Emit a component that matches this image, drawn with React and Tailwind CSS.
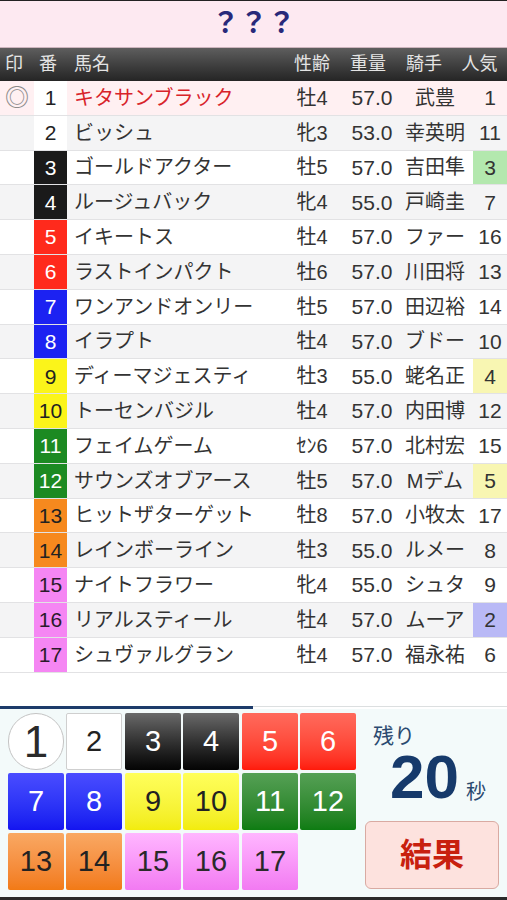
import React from "react";

const horses = [
  [1, "キタサンブラック", "牡4", "57.0", "武豊", 1],
  [2, "ビッシュ", "牝3", "53.0", "幸英明", 11],
  [3, "ゴールドアクター", "牡5", "57.0", "吉田隼", 3],
  [4, "ルージュバック", "牝4", "55.0", "戸崎圭", 7],
  [5, "イキートス", "牡4", "57.0", "ファー", 16],
  [6, "ラストインパクト", "牡6", "57.0", "川田将", 13],
  [7, "ワンアンドオンリー", "牡5", "57.0", "田辺裕", 14],
  [8, "イラプト", "牡4", "57.0", "ブドー", 10],
  [9, "ディーマジェスティ", "牡3", "55.0", "蛯名正", 4],
  [10, "トーセンバジル", "牡4", "57.0", "内田博", 12],
  [11, "フェイムゲーム", "ｾﾝ6", "57.0", "北村宏", 15],
  [12, "サウンズオブアース", "牡5", "57.0", "Mデム", 5],
  [13, "ヒットザターゲット", "牡8", "57.0", "小牧太", 17],
  [14, "レインボーライン", "牡3", "55.0", "ルメー", 8],
  [15, "ナイトフラワー", "牝4", "55.0", "シュタ", 9],
  [16, "リアルスティール", "牡4", "57.0", "ムーア", 2],
  [17, "シュヴァルグラン", "牡4", "57.0", "福永祐", 6],
];

// frame (waku) colours for the number cell
const frameCell = (n) => {
  if (n <= 2) return "bg-white text-[#222]";
  if (n <= 4) return "bg-[#1a1a1a] text-white";
  if (n <= 6) return "bg-[#ff2a1c] text-white";
  if (n <= 8) return "bg-[#1c22f2] text-white";
  if (n <= 10) return "bg-[#fbf41a] text-[#222]";
  if (n <= 12) return "bg-[#1c8a22] text-white";
  if (n <= 14) return "bg-[#f6891e] text-[#222]";
  return "bg-[#f586f3] text-[#2a1a2a]";
};

const frameButton = (n) => {
  if (n <= 2) return "bg-white text-[#222] border border-[#cfcfcf]";
  if (n <= 4) return "bg-gradient-to-b from-[#6a6a6a] to-[#050505] text-white";
  if (n <= 6) return "bg-gradient-to-b from-[#ff6a5c] to-[#ff1a0a] text-white";
  if (n <= 8) return "bg-gradient-to-b from-[#4a4cff] to-[#1414f0] text-white";
  if (n <= 10) return "bg-gradient-to-b from-[#ffff5a] to-[#f2ec0a] text-[#222]";
  if (n <= 12) return "bg-gradient-to-b from-[#55a055] to-[#0d7c12] text-white";
  if (n <= 14) return "bg-gradient-to-b from-[#f9a862] to-[#f27a14] text-[#222]";
  return "bg-gradient-to-b from-[#ffb6ff] to-[#f27af2] text-[#2a2a2a]";
};

const popCell = (p) => {
  if (p === 2) return "bg-[#b9b9f6]";
  if (p === 3) return "bg-[#b3e8ae]";
  if (p === 4 || p === 5) return "bg-[#f8f6b2]";
  return "";
};

const Row = ({ h }) => {
  const [no, name, sex, weight, jockey, pop] = h;
  const rowBg = no === 1 ? "bg-[#fff0f2]" : no % 2 === 0 ? "bg-[#f4f4f5]" : "bg-white";
  return (
    <div className={`flex h-[34.8px] border-b border-[#e2e2e4] ${rowBg}`}>
      <div className="w-[34px] flex items-center justify-center text-[24px] leading-none text-[#888]">
        {no === 1 ? "◎" : ""}
      </div>
      <div className={`w-[33px] flex items-center justify-center text-[21px] ${frameCell(no)}`}>
        {no}
      </div>
      <div
        className={`flex-1 flex items-center pl-[7px] text-[20px] whitespace-nowrap ${
          no === 1 ? "text-[#d8232a]" : "text-[#333]"
        }`}
      >
        {name}
      </div>
      <div className="w-[70px] flex items-center justify-center text-[20px] text-[#333]">{sex}</div>
      <div className="w-[50px] flex items-center justify-center text-[21px] text-[#333]">{weight}</div>
      <div className="w-[76px] flex items-center justify-center text-[20px] text-[#333] whitespace-nowrap">
        {jockey}
      </div>
      <div className={`w-[34px] flex items-center justify-center text-[21px] text-[#333] ${popCell(pop)}`}>
        {pop}
      </div>
    </div>
  );
};

const NumButton = ({ n }) => {
  if (n === 1) {
    return (
      <div className="w-[56px] h-[57px] rounded-full border border-[#c4c4c4] bg-white flex items-center justify-center text-[44px] text-[#2a2a2a]">
        1
      </div>
    );
  }
  return (
    <div
      className={`w-[56px] h-[57px] rounded-[2px] flex items-center justify-center text-[29px] font-medium ${frameButton(n)}`}
    >
      {n}
    </div>
  );
};

const Pair = ({ nums }) => (
  <div className="flex gap-[2px]">
    {nums.map((n) => (
      <NumButton key={n} n={n} />
    ))}
  </div>
);

export default function App() {
  const grid = [
    [[1, 2], [3, 4], [5, 6]],
    [[7, 8], [9, 10], [11, 12]],
    [[13, 14], [15, 16], [17]],
  ];

  return (
    <div
      className="w-[507px] h-[900px] flex flex-col bg-white overflow-hidden"
      style={{ fontFamily: '"Liberation Sans", "Noto Sans CJK JP", sans-serif' }}
    >
      <div className="h-[1px] bg-[#222]" />
      {/* title */}
      <div className="h-[47px] bg-[#fde9f1] border-b border-[#cdb4bd] flex items-center justify-center">
        <span className="text-[28px] font-bold text-[#28297a]">？？？</span>
      </div>
      {/* table header */}
      <div className="h-[33px] flex items-center bg-gradient-to-b from-[#5e5e5e] to-[#252525] text-[18px] text-[#e4e4e4]">
        <div className="w-[28px] text-center">印</div>
        <div className="w-[40px] text-center">番</div>
        <div className="flex-1 pl-[6px]">馬名</div>
        <div className="w-[56px] text-center">性齢</div>
        <div className="w-[56px] text-center">重量</div>
        <div className="w-[56px] text-center">騎手</div>
        <div className="w-[55px] text-center">人気</div>
      </div>
      {/* rows */}
      <div className="flex flex-col">
        {horses.map((h) => (
          <Row key={h[0]} h={h} />
        ))}
      </div>
      <div className="flex-1" />
      {/* progress */}
      <div className="h-[3px] flex">
        <div className="w-[253px] bg-[#1c3b6a]" />
        <div className="flex-1 border-t border-[#dcdfe0]" />
      </div>
      {/* bottom panel */}
      <div className="h-[188px] bg-[#f3fafa] flex">
        <div className="flex flex-col gap-[3px] pt-[4px] pl-[8px]">
          {grid.map((row, i) => (
            <div key={i} className="flex gap-[3px]">
              {row.map((p) => (
                <Pair key={p[0]} nums={p} />
              ))}
            </div>
          ))}
        </div>
        <div className="flex-1 flex flex-col pl-[9px] pr-[8px] pt-[15px] pb-[8px]">
          <div className="pl-[8px] text-[21px] leading-[24px] text-[#2b4a70]">残り</div>
          <div className="flex items-end pl-[25px] mt-[5px]">
            <span className="text-[62px] font-bold leading-[48px] text-[#163a6b]">20</span>
            <span className="ml-[7px] mb-[-2px] text-[20px] leading-[22px] text-[#2b4a70]">秒</span>
          </div>
          <div className="mt-auto h-[68px] rounded-[6px] border border-[#d9aaa2] bg-[#fde2de] flex items-center justify-center">
            <span className="text-[32px] font-bold text-[#c8200e]">結果</span>
          </div>
        </div>
      </div>
      <div className="h-[3px] bg-[#2a2a2a]" />
    </div>
  );
}
